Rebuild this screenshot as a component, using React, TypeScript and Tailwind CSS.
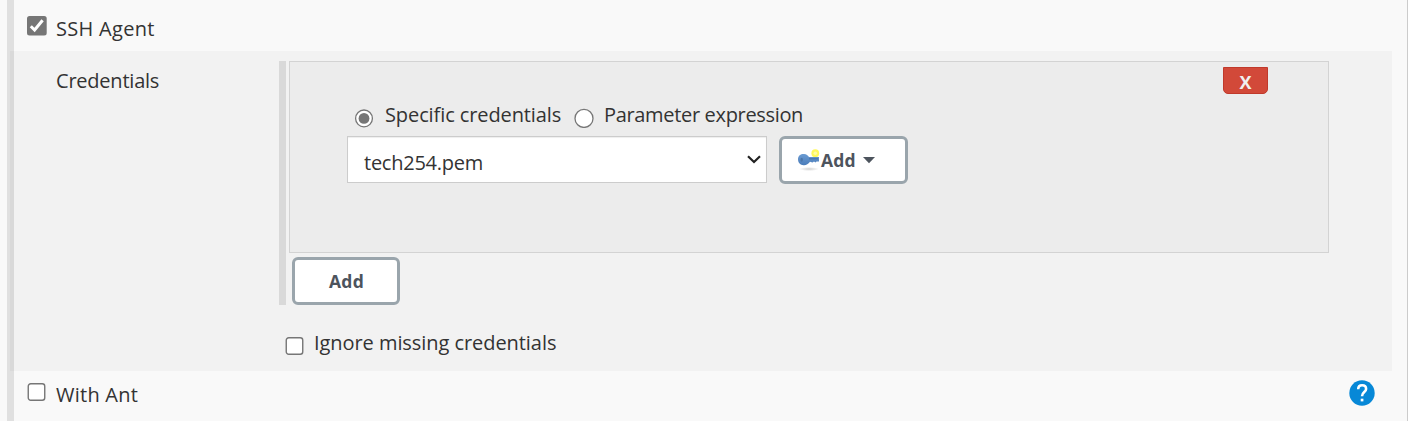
import React from 'react';

function CheckBox({ checked = false, className = '' }: { checked?: boolean; className?: string }) {
  return (
    <svg className={`shrink-0 ${className}`} width="20" height="20" viewBox="0 0 20 20" role="checkbox" aria-checked={checked}>
      {checked ? (
        <>
          <rect width="19.7" height="19.5" rx="2.5" fill="#767676" />
          <path d="M3.8 10.2L7.6 14L15.6 4.2" fill="none" stroke="#fff" strokeWidth="3" />
        </>
      ) : (
        <rect x="1.25" y="1.75" width="16.5" height="16.5" rx="2.5" fill="#fff" stroke="#767676" strokeWidth="1.4" />
      )}
    </svg>
  );
}

function Radio({ checked = false, className = '' }: { checked?: boolean; className?: string }) {
  return (
    <svg className={`shrink-0 ${className}`} width="20" height="20" viewBox="0 0 20 20" role="radio" aria-checked={checked}>
      <circle cx="10" cy="10.4" r={checked ? 8.4 : 9} fill="#fff" stroke="#767676" strokeWidth="1.3" />
      {checked && <circle cx="10" cy="10.4" r="5.4" fill="#767676" />}
    </svg>
  );
}

function KeyIcon() {
  return (
    <svg className="mt-[10px] shrink-0" width="23" height="23" viewBox="0 0 23 23" aria-hidden="true">
      <defs>
        <radialGradient id="shade">
          <stop offset="0" stopColor="#888" stopOpacity=".4" />
          <stop offset="1" stopColor="#888" stopOpacity="0" />
        </radialGradient>
        <linearGradient id="metal" x1="0" y1="0" x2="0" y2="1">
          <stop offset="0" stopColor="#6b9bd2" />
          <stop offset="1" stopColor="#4a7cb9" />
        </linearGradient>
      </defs>
      <ellipse cx="11" cy="20" rx="10" ry="2" fill="url(#shade)" />
      <path d="M0 10.3C0 6.3 3 4.8 6 5C8.5 5.2 10 6.6 11 7.9H21V12.5H18.5L17.5 13.5L16 12.5L14.5 13.5L12 12.8C10 15 8.5 16.5 5.5 16.3C2.5 16 0 14 0 10.3Z" fill="url(#metal)" />
      <ellipse cx="3.7" cy="10.8" rx="1.2" ry="2" fill="#4b75a8" />
      <path d="M11 9.8H20" stroke="#4470a4" strokeWidth="1" />
      <circle cx="17.3" cy="4.2" r="3.9" fill="#fff83f" fillOpacity=".85" />
      <circle cx="17.3" cy="4.2" r="1.8" fill="#fffca6" />
    </svg>
  );
}

export default function App() {
  return (
    <div className="flex h-[421px] w-[1422px] bg-white font-['Open_Sans',sans-serif] text-[20px] leading-[28px] text-[#333]">
      <div className="flex w-[1408px] border-r border-[#ccc] bg-[#f9f9f9] pl-[7px]">
        <div className="flex w-[7px] shrink-0 flex-col bg-[#e0e0e0] pt-[51px]">
          <div className="ml-[3px] h-[320px] bg-[#d9d9d9]" />
        </div>
        <div className="flex flex-1 flex-col">
          <div className="flex h-[51px] items-start pl-[13px]">
            <CheckBox checked className="mt-4" />
            <span className="ml-[9px] mt-[15px] whitespace-nowrap tracking-[0.3px]">SSH Agent</span>
          </div>

          <div className="mr-[15px] flex h-[320px] bg-[#f2f2f2] pl-[42px]">
            <div className="w-[223px] shrink-0 pt-[16px]">
              <span className="tracking-[-0.22px]">Credentials</span>
            </div>
            <div className="pt-[10px]">
              <div className="flex h-[244px] border-l-[7px] border-[#d9d9d9] pl-[3px]">
                <div>
                  <div className="h-[192px] w-[1040px] border border-[#d3d3d3] bg-[#ececec] pl-[57px]">
                    <div className="flex h-[38px] justify-end pr-[60px] pt-[5px]">
                      <button className="flex h-[27px] w-[45px] items-center justify-center rounded-b-[5px] border border-[#c0392b] bg-[#d24939] pt-[2px] text-[18px] font-bold text-[#f0f0f0]">X</button>
                    </div>
                    <div className="flex h-[36px] items-start pl-[7px]">
                      <Radio checked className="mt-[8px]" />
                      <span className="ml-[11px] mt-px w-[190px] whitespace-nowrap tracking-[-0.1px]">Specific credentials</span>
                      <Radio className="ml-[-1px] mt-[8px]" />
                      <span className="ml-[10px] mt-px whitespace-nowrap tracking-[-0.33px]">Parameter expression</span>
                    </div>
                    <div className="flex">
                      <div className="flex h-[47px] w-[420px] justify-between border border-[#ccc] bg-white pl-4 pr-[5px] pt-[12px] shadow-[inset_0_1px_1px_#eee]">
                        <span className="tracking-[-0.25px]">tech254.pem</span>
                        <svg className="mt-[6px]" width="14" height="9" viewBox="0 0 14 9">
                          <path d="M1 1.2L7 7L13 1.2" fill="none" stroke="#222" strokeWidth="2.2" />
                        </svg>
                      </div>
                      <button className="ml-3 flex h-[48px] w-[129px] rounded-[6px] border-[3px] border-[#9aa5ac] bg-white pl-4 text-[17.5px] font-bold text-[#4d545d]">
                        <KeyIcon />
                        <span className="mt-[7px] tracking-[0.2px]">Add</span>
                        <svg className="ml-[7px] mt-[18px]" width="12" height="7" viewBox="0 0 12 7">
                          <path d="M0 0H12L6 6.3Z" fill="#4d545d" />
                        </svg>
                      </button>
                    </div>
                  </div>
                  <button className="ml-[3px] mt-1 flex h-[48px] w-[108px] items-center justify-center rounded-[6px] border-[3px] border-[#9aa5ac] bg-white pl-px text-[17.5px] font-bold tracking-[0.2px] text-[#4d545d]">Add</button>
                </div>
              </div>
              <div className="flex items-start pl-[6px] pt-[23px]">
                <CheckBox className="mt-[8px]" />
                <span className="ml-[9px] mt-px whitespace-nowrap tracking-[-0.06px]">Ignore missing credentials</span>
              </div>
            </div>
          </div>

          <div className="flex h-[50px] items-start pl-[13px]">
            <CheckBox className="mt-[11px]" />
            <span className="ml-[9px] mt-[10px] whitespace-nowrap tracking-[0.25px]">With Ant</span>
            <svg className="ml-auto mr-[32px] mt-[9px]" width="26" height="26" viewBox="0 0 26 26" role="img" aria-label="Help">
              <circle cx="13" cy="13" r="12.7" fill="#0788d7" />
              <path d="M9.2 9.3C9.2 6.8 10.8 5.3 13.1 5.3C15.5 5.3 17.1 6.8 17.1 9C17.1 12 13 12.3 13 16.2" fill="none" stroke="#fff" strokeWidth="2.6" />
              <rect x="11.7" y="18.7" width="2.7" height="2.7" fill="#fff" />
            </svg>
          </div>
        </div>
      </div>
    </div>
  );
}
